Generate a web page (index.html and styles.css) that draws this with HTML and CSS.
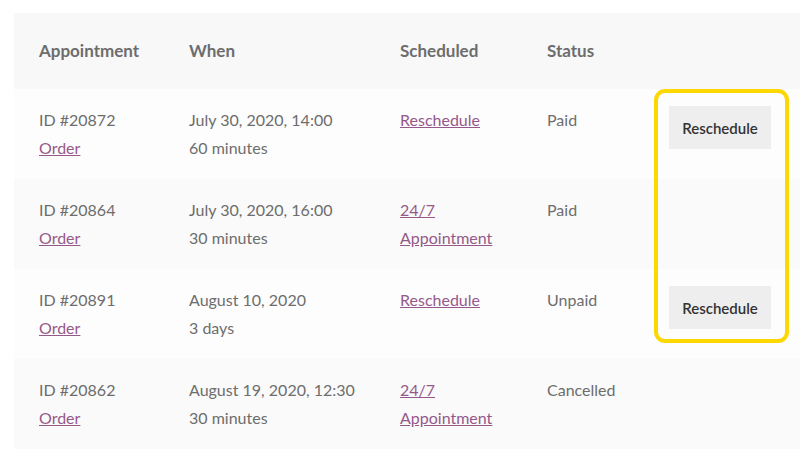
FILE: index.html
```html
<!DOCTYPE html>
<html>
<head>
<meta charset="utf-8">
<link rel="stylesheet" href="styles.css">
</head>
<body>
<div class="wrap">
  <table class="appts">
    <colgroup>
      <col class="c1"><col class="c2"><col class="c3"><col class="c4"><col class="c5">
    </colgroup>
    <thead>
      <tr><th>Appointment</th><th>When</th><th>Scheduled</th><th>Status</th><th></th></tr>
    </thead>
    <tbody>
      <tr>
        <td>ID #20872<br><a href="#">Order</a></td>
        <td>July 30, 2020, 14:00<br>60 minutes</td>
        <td><a href="#">Reschedule</a></td>
        <td>Paid</td>
        <td><button class="btn">Reschedule</button></td>
      </tr>
      <tr>
        <td>ID #20864<br><a href="#">Order</a></td>
        <td>July 30, 2020, 16:00<br>30 minutes</td>
        <td><a href="#">24/7</a><br><a href="#">Appointment</a></td>
        <td>Paid</td>
        <td></td>
      </tr>
      <tr>
        <td>ID #20891<br><a href="#">Order</a></td>
        <td>August 10, 2020<br>3 days</td>
        <td><a href="#">Reschedule</a></td>
        <td>Unpaid</td>
        <td><button class="btn">Reschedule</button></td>
      </tr>
      <tr>
        <td>ID #20862<br><a href="#">Order</a></td>
        <td>August 19, 2020, 12:30<br>30 minutes</td>
        <td><a href="#">24/7</a><br><a href="#">Appointment</a></td>
        <td>Cancelled</td>
        <td></td>
      </tr>
    </tbody>
  </table>
  <div class="highlight"></div>
</div>
</body>
</html>
```

FILE: styles.css
```css
html, body {
  margin: 0;
  padding: 0;
  background: #ffffff;
}
body {
  font-family: "Lato", "Liberation Sans", sans-serif;
  font-size: 16px;
  color: #6d6d6d;
}
.wrap {
  position: relative;
  padding: 13px 12px 0 14px;
}
.appts {
  border-collapse: collapse;
  table-layout: fixed;
  width: 786px;
}
.c1 { width: 150px; }
.c2 { width: 211px; }
.c3 { width: 147px; }
.c4 { width: 122px; }
.c5 { width: 156px; }
.appts th {
  background: #f8f8f8;
  text-align: left;
  font-size: 17px;
  font-weight: 700;
  line-height: 28px;
  padding: 24px 0 24px 25px;
  color: #6d6d6d;
}
.appts td {
  background: #fdfdfd;
  vertical-align: top;
  line-height: 28px;
  padding: 17px 0 17px 25px;
  height: 56px;
}
.appts tbody tr:nth-child(2n) td {
  background: #fafafa;
}
.appts a {
  color: #96588a;
  text-decoration: underline;
}
.btn {
  display: block;
  width: 102px;
  height: 43px;
  border: 0;
  background: #eeeeee;
  color: #333333;
  font-family: "Lato", "Liberation Sans", sans-serif;
  font-size: 15px;
  font-weight: 600;
  padding: 0;
  margin: 0;
}
.highlight {
  position: absolute;
  left: 654px;
  top: 89px;
  width: 135px;
  height: 254px;
  box-sizing: border-box;
  border: 4px solid #fcd800;
  border-radius: 11px;
}
```
